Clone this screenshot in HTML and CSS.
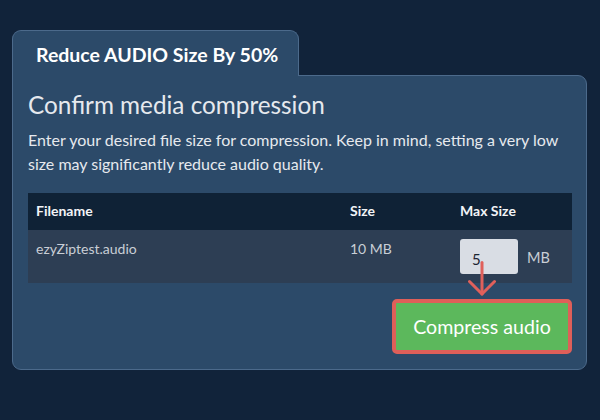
FILE: index.html
```html
<!DOCTYPE html>
<html lang="en">
<head>
<meta charset="utf-8">
<title>Reduce AUDIO Size By 50%</title>
<link rel="stylesheet" href="styles.css">
</head>
<body>
<div class="page">
  <div class="tab">Reduce AUDIO Size By 50%</div>
  <div class="panel">
    <h1 class="title">Confirm media compression</h1>
    <p class="desc">Enter your desired file size for compression. Keep in mind, setting a very low size may significantly reduce audio quality.</p>
    <table class="files">
      <thead>
        <tr><th class="c-name">Filename</th><th class="c-size">Size</th><th class="c-max">Max Size</th></tr>
      </thead>
      <tbody>
        <tr>
          <td class="c-name">ezyZiptest.audio</td>
          <td class="c-size">10 MB</td>
          <td class="c-max">
            <div class="max-wrap">
              <input class="max-input" type="text" value="5">
              <span class="unit">MB</span>
              <svg class="arrow" width="32" height="36" viewBox="0 0 32 36" aria-hidden="true">
                <path d="M14 1.5 V33" stroke="#e0605b" stroke-width="3" fill="none" stroke-linecap="round"/>
                <path d="M1.5 20.5 L14 33 L26.5 20.5" stroke="#e0605b" stroke-width="3" fill="none" stroke-linecap="round" stroke-linejoin="round"/>
              </svg>
            </div>
          </td>
        </tr>
      </tbody>
    </table>
    <div class="actions">
      <button class="compress" type="button">Compress audio</button>
    </div>
  </div>
</div>
</body>
</html>
```
FILE: styles.css
```css
html, body {
  margin: 0;
  padding: 0;
  background: #11233a;
  font-family: Lato, "Open Sans", sans-serif;
}
.page {
  padding: 30px 13px 0 12px;
  width: 575px;
}
.tab {
  position: relative;
  z-index: 1;
  width: 287px;
  height: 46px;
  box-sizing: border-box;
  padding: 12px 0 0 23px;
  margin-bottom: -1px;
  background: #2c4a69;
  border: 1px solid #4c6a8b;
  border-bottom: none;
  border-radius: 9px 9px 0 0;
  color: #ffffff;
  font-weight: 700;
  font-size: 19.5px;
  line-height: 24px;
  white-space: nowrap;
}
.panel {
  background: #2c4a69;
  border: 1px solid #4c6a8b;
  border-radius: 0 9px 9px 9px;
  padding: 14px 14px 15px 15px;
}
.title {
  margin: 0;
  font-weight: 400;
  font-size: 24.3px;
  line-height: 30px;
  color: #e6e9ee;
}
.desc {
  margin: 8px 0 0 0;
  font-size: 16px;
  line-height: 24px;
  color: #e6e9ee;
}
.files {
  margin-top: 17px;
  width: 544px;
  border-collapse: collapse;
  table-layout: fixed;
}
.files th {
  background: #0f2236;
  color: #f2f4f7;
  font-weight: 700;
  font-size: 14px;
  line-height: 20px;
  text-align: left;
  padding: 8px 8px 9px 8px;
}
.files td {
  background: #2d3e54;
  color: #c9ced6;
  font-size: 14px;
  line-height: 20px;
  vertical-align: top;
  padding: 9px 8px 9px 8px;
}
.c-name { width: 298px; }
.c-size { width: 94px; }
.c-max { width: 104px; }
.max-wrap {
  position: relative;
  display: flex;
  align-items: center;
  gap: 9px;
}
.max-input {
  width: 58px;
  height: 35px;
  box-sizing: border-box;
  border: none;
  border-radius: 3px;
  background: #d9dde4;
  padding: 4px 0 0 12px;
  font-family: Lato, sans-serif;
  font-size: 15px;
  color: #1c2533;
  outline: none;
}
.unit {
  font-size: 14.5px;
  color: #c9ced6;
  padding-top: 3px;
}
.arrow {
  position: absolute;
  left: 8px;
  top: 22px;
}
.actions {
  display: flex;
  justify-content: flex-end;
  margin-top: 16px;
  width: 544px;
}
.compress {
  width: 180px;
  height: 55px;
  box-sizing: border-box;
  border: 4px solid #df5f59;
  border-radius: 5px;
  background: #5cb85c;
  color: #ffffff;
  font-family: Lato, sans-serif;
  font-size: 19.6px;
  font-weight: 400;
  padding: 0;
}
```
